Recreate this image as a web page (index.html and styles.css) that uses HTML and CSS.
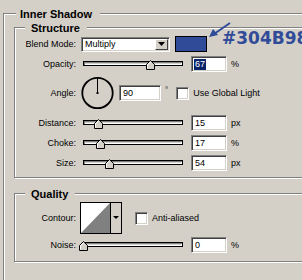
FILE: index.html
```html
<!DOCTYPE html>
<html>
<head>
<meta charset="utf-8">
<link rel="stylesheet" href="styles.css">
</head>
<body>
<fieldset class="group outer">
  <legend class="title title-outer">Inner Shadow</legend>
  <fieldset class="group sub structure">
    <legend class="title title-sub">Structure</legend>
    <div class="row row-blend">
      <span class="label">Blend Mode:</span>
      <div class="select">
        <span class="select-text">Multiply</span>
        <span class="drop-btn"><svg width="7" height="4" viewBox="0 0 7 4"><polygon points="0,0 7,0 3.5,4" fill="#000"/></svg></span>
      </div>
      <div class="swatch-wrap">
        <div class="swatch"></div>
        <svg class="note-arrow" width="26" height="20" viewBox="0 0 26 20">
          <line x1="22" y1="2" x2="6" y2="13" stroke="#304B98" stroke-width="2"/>
          <polygon points="1,16 5,8 10,14" fill="#304B98"/>
        </svg>
        <span class="note-text">#304B98</span>
      </div>
    </div>
    <div class="row row-field">
      <span class="label">Opacity:</span>
      <div class="slider"><div class="track"></div><svg class="thumb" style="left:63px" width="9" height="10" viewBox="0 0 9 10"><path d="M0.5 9.5 V4.5 L4.5 0.5 L8.5 4.5 V9.5 Z" fill="#d4d0c8" stroke="#000"/><path d="M1.5 8.5 V4.9 L4.5 1.9" fill="none" stroke="#fff"/></svg></div>
      <div class="field"><span class="sel">67</span></div>
      <span class="unit">%</span>
    </div>
    <div class="row row-angle">
      <span class="label">Angle:</span>
      <svg class="dial" width="33" height="34" viewBox="0 0 33 34">
        <circle cx="16.5" cy="17" r="15.2" fill="none" stroke="#000" stroke-width="1.8"/>
        <line x1="16.5" y1="2" x2="16.5" y2="17" stroke="#000" stroke-width="1"/>
        <rect x="15.5" y="16" width="2" height="2" fill="#000"/>
      </svg>
      <div class="field field-angle">90</div>
      <span class="deg">°</span>
      <span class="check"></span>
      <span class="check-label">Use Global Light</span>
    </div>
    <div class="row row-field row-distance">
      <span class="label">Distance:</span>
      <div class="slider"><div class="track"></div><svg class="thumb" style="left:11px" width="9" height="10" viewBox="0 0 9 10"><path d="M0.5 9.5 V4.5 L4.5 0.5 L8.5 4.5 V9.5 Z" fill="#d4d0c8" stroke="#000"/><path d="M1.5 8.5 V4.9 L4.5 1.9" fill="none" stroke="#fff"/></svg></div>
      <div class="field">15</div>
      <span class="unit">px</span>
    </div>
    <div class="row row-field">
      <span class="label">Choke:</span>
      <div class="slider"><div class="track"></div><svg class="thumb" style="left:13px" width="9" height="10" viewBox="0 0 9 10"><path d="M0.5 9.5 V4.5 L4.5 0.5 L8.5 4.5 V9.5 Z" fill="#d4d0c8" stroke="#000"/><path d="M1.5 8.5 V4.9 L4.5 1.9" fill="none" stroke="#fff"/></svg></div>
      <div class="field">17</div>
      <span class="unit">%</span>
    </div>
    <div class="row row-field">
      <span class="label">Size:</span>
      <div class="slider"><div class="track"></div><svg class="thumb" style="left:22px" width="9" height="10" viewBox="0 0 9 10"><path d="M0.5 9.5 V4.5 L4.5 0.5 L8.5 4.5 V9.5 Z" fill="#d4d0c8" stroke="#000"/><path d="M1.5 8.5 V4.9 L4.5 1.9" fill="none" stroke="#fff"/></svg></div>
      <div class="field">54</div>
      <span class="unit">px</span>
    </div>
  </fieldset>
  <fieldset class="group sub quality">
    <legend class="title title-sub">Quality</legend>
    <div class="row row-contour">
      <span class="label">Contour:</span>
      <svg class="contour" width="42" height="32" viewBox="0 0 42 32">
        <rect x="0.5" y="0.5" width="41" height="31" fill="#d4d0c8" stroke="#000"/>
        <rect x="1" y="1" width="29" height="30" fill="#fff"/>
        <polygon points="1,31 30,1 30,31" fill="#808080"/>
        <line x1="30.5" y1="0" x2="30.5" y2="32" stroke="#000"/>
        <polygon points="33,14 39,14 36,17" fill="#000"/>
      </svg>
      <span class="check check-aa"></span>
      <span class="check-label">Anti-aliased</span>
    </div>
    <div class="row row-field row-noise">
      <span class="label">Noise:</span>
      <div class="slider"><div class="track"></div><svg class="thumb" style="left:-4px" width="9" height="10" viewBox="0 0 9 10"><path d="M0.5 9.5 V4.5 L4.5 0.5 L8.5 4.5 V9.5 Z" fill="#d4d0c8" stroke="#000"/><path d="M1.5 8.5 V4.9 L4.5 1.9" fill="none" stroke="#fff"/></svg></div>
      <div class="field">0</div>
      <span class="unit">%</span>
    </div>
  </fieldset>
</fieldset>
</body>
</html>
```
FILE: styles.css
```css
html, body {
  margin: 0;
  padding: 0;
  width: 302px;
  height: 280px;
  overflow: hidden;
  background: #d4d0c8;
}
body {
  font-family: "Liberation Sans", Arial, sans-serif;
  font-size: 9px;
  color: #000;
}
.group {
  margin: 0;
  padding: 0;
  min-width: 0;
  border: 1px solid #808080;
  box-shadow: inset 1px 1px 0 #fff, 1px 1px 0 #fff;
}
.outer {
  margin: 6px 0 0 3px;
  width: 330px;
  padding: 0 0 40px 10px;
}
.title {
  font-weight: bold;
  font-size: 11px;
  line-height: 11px;
  height: 14px;
  box-sizing: border-box;
  padding-top: 3px;
  background: #d4d0c8;
}
.title-outer {
  margin-left: 2px;
  padding-left: 4px;
  padding-right: 8px;
}
.title-sub {
  margin-left: 10px;
  padding-left: 6px;
  padding-right: 7px;
}
.structure {
  padding: 2px 0 6px 0;
}
.quality {
  margin-top: 8px;
  padding: 2px 0 8px 0;
}
.row {
  display: flex;
  align-items: center;
  height: 16px;
  white-space: nowrap;
}
.row-field {
  margin-top: 4px;
}
.row-distance {
  margin-top: 5px;
}
.row-noise {
  margin-top: 3px;
}
.label {
  width: 61px;
  margin-right: 5px;
  text-align: right;
  flex-shrink: 0;
}
.select {
  width: 89px;
  height: 15px;
  box-sizing: border-box;
  background: #fff;
  border-top: 1px solid #808080;
  border-left: 1px solid #808080;
  border-bottom: 1px solid #fff;
  border-right: 1px solid #fff;
  box-shadow: inset 1px 1px 0 #404040, inset -1px -1px 0 #d4d0c8;
  display: flex;
  align-items: center;
  justify-content: space-between;
  padding: 1px;
}
.select-text {
  padding-left: 2px;
  line-height: 11px;
}
.drop-btn {
  width: 13px;
  height: 11px;
  box-sizing: border-box;
  background: #d4d0c8;
  border-top: 1px solid #fff;
  border-left: 1px solid #fff;
  border-right: 1px solid #404040;
  border-bottom: 1px solid #404040;
  display: flex;
  align-items: center;
  justify-content: center;
}
.drop-btn svg {
  display: block;
}
.swatch-wrap {
  position: relative;
  margin-left: 5px;
}
.swatch {
  width: 32px;
  height: 16px;
  box-sizing: border-box;
  border: 1px solid #000;
  background: #304b98;
}
.note-arrow {
  position: absolute;
  left: 33px;
  top: -15px;
}
.note-text {
  position: absolute;
  left: 47px;
  top: -6px;
  font-family: "DejaVu Sans", Verdana, sans-serif;
  font-weight: bold;
  font-size: 17px;
  line-height: 17px;
  color: #304b98;
}
.slider {
  position: relative;
  width: 100px;
  height: 16px;
  margin-left: 2px;
  flex-shrink: 0;
}
.track {
  position: absolute;
  left: 0;
  top: 5px;
  width: 100px;
  height: 5px;
  box-sizing: border-box;
  border: 1px solid #000;
  background: #d4d0c8;
  box-shadow: inset 1px 1px 0 #808080, inset -1px -1px 0 #fff;
}
.thumb {
  position: absolute;
  top: 4px;
  display: block;
}
.field {
  width: 36px;
  height: 16px;
  box-sizing: border-box;
  margin-left: 8px;
  background: #fff;
  border-top: 1px solid #808080;
  border-left: 1px solid #808080;
  border-bottom: 1px solid #fff;
  border-right: 1px solid #fff;
  box-shadow: inset 1px 1px 0 #404040, inset -1px -1px 0 #d4d0c8;
  padding-left: 3px;
  line-height: 14px;
  flex-shrink: 0;
}
.sel {
  display: inline-block;
  background: #0a246a;
  color: #fff;
  line-height: 11px;
  padding: 0 1px;
  margin-left: -1px;
}
.unit {
  margin-left: 4px;
}
.row-angle {
  height: 34px;
  margin-top: 4px;
}
.dial {
  display: block;
  flex-shrink: 0;
}
.field-angle {
  width: 42px;
  margin-left: 5px;
}
.deg {
  margin-left: 4px;
  align-self: flex-start;
  margin-top: 9px;
  font-size: 8px;
}
.check {
  width: 13px;
  height: 13px;
  box-sizing: border-box;
  margin-left: 8px;
  background: #fff;
  border-top: 1px solid #808080;
  border-left: 1px solid #808080;
  border-bottom: 1px solid #fff;
  border-right: 1px solid #fff;
  box-shadow: inset 1px 1px 0 #404040, inset -1px -1px 0 #d4d0c8;
  flex-shrink: 0;
}
.check-label {
  margin-left: 4px;
}
.row-contour {
  height: 32px;
}
.contour {
  display: block;
  margin-left: -1px;
  flex-shrink: 0;
}
.check-aa {
  margin-left: 13px;
}
```
